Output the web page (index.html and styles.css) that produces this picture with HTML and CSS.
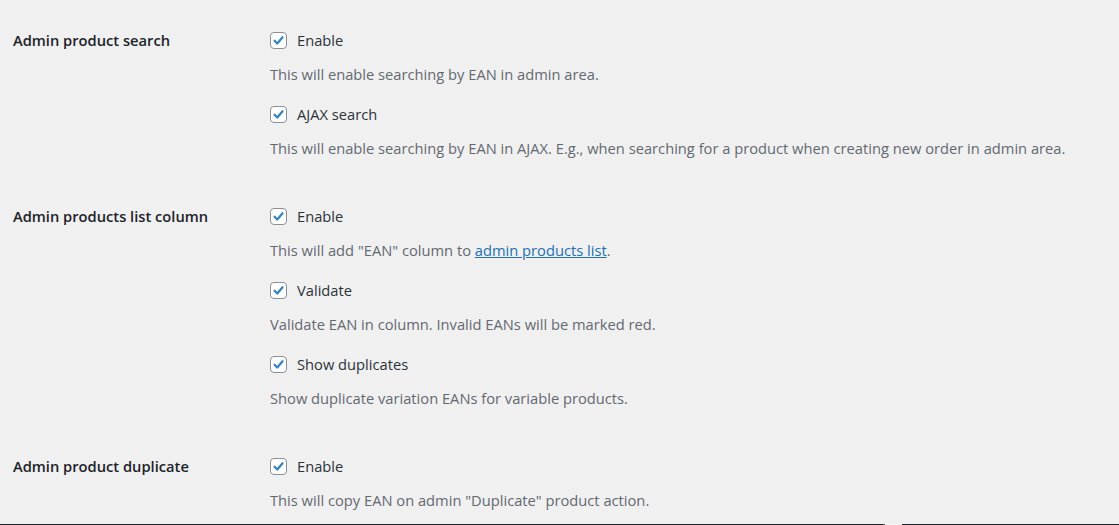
FILE: index.html
```html
<!DOCTYPE html>
<html lang="en">
<head>
  <meta charset="UTF-8">
  <title>EAN settings</title>
  <link rel="stylesheet" href="styles.css">
</head>
<body>

<div class="page">
  <div class="settings">

    <div class="section">
      <div class="label">Admin product search</div>
      <div class="fields">
        <label class="option"><span class="check"><svg viewBox="0 0 16 16"><path d="M3.8 8.2 L6.7 11.2 L12.3 4.6"/></svg></span>Enable</label>
        <p class="desc">This will enable searching by EAN in admin area.</p>
        <label class="option"><span class="check"><svg viewBox="0 0 16 16"><path d="M3.8 8.2 L6.7 11.2 L12.3 4.6"/></svg></span>AJAX search</label>
        <p class="desc">This will enable searching by EAN in AJAX. E.g., when searching for a product when creating new order in admin area.</p>
      </div>
    </div>

    <div class="section">
      <div class="label">Admin products list column</div>
      <div class="fields">
        <label class="option"><span class="check"><svg viewBox="0 0 16 16"><path d="M3.8 8.2 L6.7 11.2 L12.3 4.6"/></svg></span>Enable</label>
        <p class="desc">This will add "EAN" column to <a href="#">admin products list</a>.</p>
        <label class="option"><span class="check"><svg viewBox="0 0 16 16"><path d="M3.8 8.2 L6.7 11.2 L12.3 4.6"/></svg></span>Validate</label>
        <p class="desc">Validate EAN in column. Invalid EANs will be marked red.</p>
        <label class="option"><span class="check"><svg viewBox="0 0 16 16"><path d="M3.8 8.2 L6.7 11.2 L12.3 4.6"/></svg></span>Show duplicates</label>
        <p class="desc">Show duplicate variation EANs for variable products.</p>
      </div>
    </div>

    <div class="section">
      <div class="label">Admin product duplicate</div>
      <div class="fields">
        <label class="option"><span class="check"><svg viewBox="0 0 16 16"><path d="M3.8 8.2 L6.7 11.2 L12.3 4.6"/></svg></span>Enable</label>
        <p class="desc">This will copy EAN on admin "Duplicate" product action.</p>
      </div>
    </div>

  </div>

  <div class="bottom-bar">
    <span class="seg-dark"></span>
    <span class="seg-edge"></span>
    <span class="seg-gap"></span>
    <span class="seg-dark"></span>
  </div>
</div>

</body>
</html>
```

FILE: styles.css
```css
body {
  margin: 0;
  background: #f0f0f1;
  font-family: "Open Sans", "Noto Sans", sans-serif;
  font-size: 14.7px;
  color: #3c434a;
  overflow: hidden;
}

.page {
  height: 525px;
  display: flex;
  flex-direction: column;
}

.settings {
  padding: 30px 0 0 13px;
}

.section {
  display: flex;
  margin-bottom: 48px;
}

.section:last-child {
  margin-bottom: 0;
}

.label {
  width: 257px;
  flex-shrink: 0;
  line-height: 20px;
  font-weight: 600;
  color: #1d2327;
}

.fields {
  display: flex;
  flex-direction: column;
  align-items: flex-start;
}

.option {
  display: flex;
  align-items: center;
  height: 20px;
  line-height: 20px;
  color: #2c3338;
  margin-top: 20px;
  cursor: pointer;
}

.option:first-child {
  margin-top: 0;
}

.check {
  width: 17px;
  height: 17px;
  box-sizing: border-box;
  border: 1px solid #8c8f94;
  border-radius: 4px;
  background: #fff;
  margin-right: 10px;
  display: flex;
  align-items: center;
  justify-content: center;
}

.check svg {
  width: 15px;
  height: 15px;
}

.check path {
  fill: none;
  stroke: #3582c4;
  stroke-width: 2.4;
  stroke-linecap: round;
  stroke-linejoin: round;
}

.desc {
  margin: 14px 0 0;
  line-height: 20px;
  color: #646970;
}

.desc a {
  color: #2271b1;
}

.bottom-bar {
  margin-top: auto;
  height: 1px;
  display: flex;
}

.seg-dark {
  flex: 1;
  background: #1d2327;
}

.seg-dark:first-child {
  flex: 0 0 883px;
}

.seg-edge {
  width: 2px;
  background: #555;
}

.seg-gap {
  width: 17px;
  background: #f6f6f6;
}
```
